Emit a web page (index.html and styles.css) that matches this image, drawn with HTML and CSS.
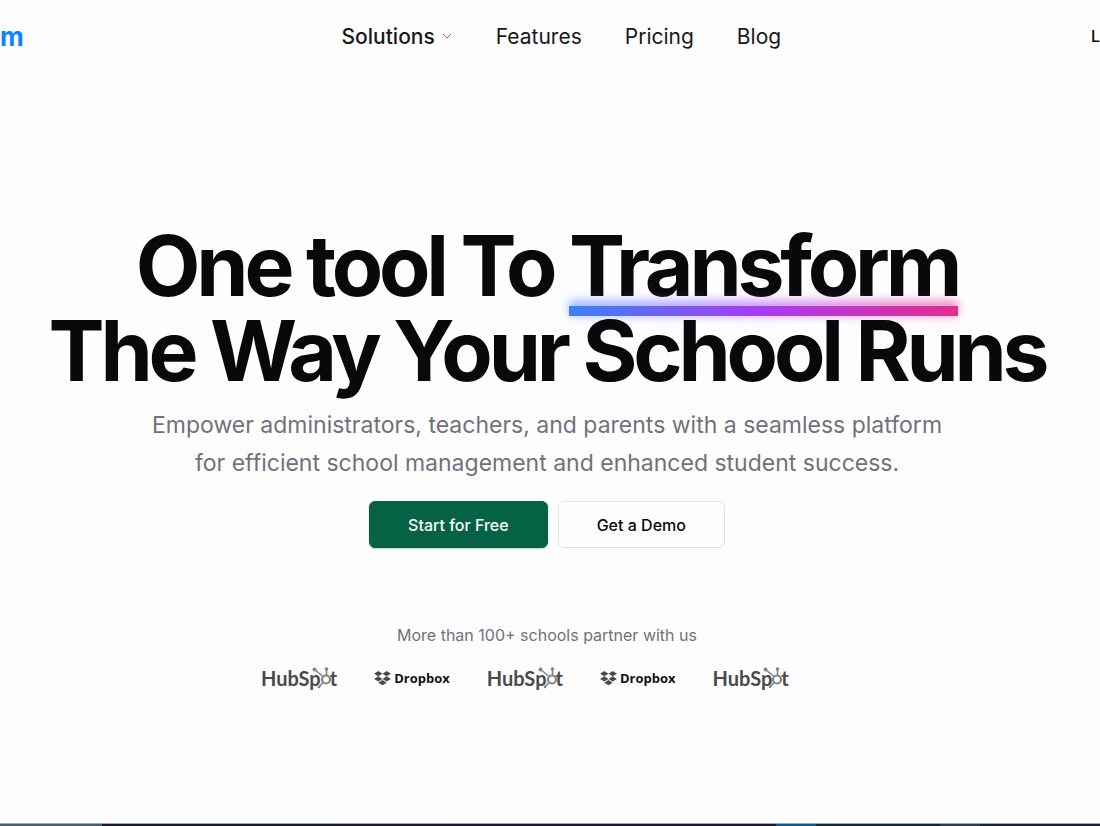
FILE: index.html
```html
<!DOCTYPE html>
<html lang="en">

<head>
    <meta charset="UTF-8">
    <meta content="width=device-width, initial-scale=1.0" name="viewport">
    <title>One tool To Transform The Way Your School Runs</title>
    <link rel="stylesheet" href="styles.css">
</head>

<body>

    <!-- Shared logo shapes -->
    <svg class="sprite" aria-hidden="true">
        <symbol id="sprocket" viewBox="0 0 20 24">
            <g fill="none" stroke="#858585">
                <circle cx="15" cy="13.500" r="4" stroke-width="2.200" />
                <path d="M12 10.500L3.500 3.500M15.500 9.500V3.500M12 16.500L8 21" stroke-width="1.600" />
            </g>
            <g fill="#858585">
                <circle cx="3.500" cy="3.500" r="2" />
                <circle cx="15.500" cy="3" r="1.800" />
                <circle cx="8" cy="21" r="1.300" />
            </g>
        </symbol>
        <symbol id="box" viewBox="0 0 18 16">
            <path fill="#4a4a4a" d="M4.500 0L9 2.800L4.500 5.600L0 2.800ZM13.500 0L18 2.800L13.500 5.600L9 2.800ZM4.500 5.600L9 8.400L4.500 11.200L0 8.400ZM13.500 5.600L18 8.400L13.500 11.200L9 8.400ZM9 9.600L13.500 12.400L9 15.200L4.500 12.400Z" />
        </symbol>
    </svg>

    <header class="header">
        <a class="logo" href="#">m</a>
        <nav class="nav">
            <button class="nav-menu" type="button">Solutions
                <svg class="chevron" viewBox="0 0 12 12" aria-hidden="true">
                    <path d="M2 4l4 4 4-4" />
                </svg>
            </button>
            <a href="#">Features</a>
            <a href="#">Pricing</a>
            <a href="#">Blog</a>
        </nav>
        <a class="login" href="#">L</a>
    </header>

    <main class="hero">
        <h1>One tool To <span class="underlined">Transform</span><br><span class="front">The Way Your School Runs</span></h1>
        <p class="lead">Empower administrators, teachers, and parents with a seamless platform for efficient school management and enhanced student success.</p>
        <div class="actions">
            <button class="btn btn-primary" type="button">Start for Free</button>
            <button class="btn btn-outline" type="button">Get a Demo</button>
        </div>

        <section class="partners">
            <p>More than 100+ schools partner with us</p>
            <ul>
                <li class="hubspot">HubSp<svg aria-hidden="true"><use href="#sprocket" /></svg>t</li>
                <li class="dropbox"><svg aria-hidden="true"><use href="#box" /></svg>Dropbox</li>
                <li class="hubspot">HubSp<svg aria-hidden="true"><use href="#sprocket" /></svg>t</li>
                <li class="dropbox"><svg aria-hidden="true"><use href="#box" /></svg>Dropbox</li>
                <li class="hubspot">HubSp<svg aria-hidden="true"><use href="#sprocket" /></svg>t</li>
            </ul>
        </section>
    </main>

    <footer class="strip"></footer>

</body>

</html>
```

FILE: styles.css
```css
* {
    box-sizing: border-box;
}

body {
    display: flex;
    flex-direction: column;
    min-height: 100vh;
    margin: 0;
    font-family: Inter, sans-serif;
    color: #09090b;
    background: #fefdfe;
}

a {
    color: inherit;
    text-decoration: none;
}

.sprite {
    position: absolute;
    width: 0;
    height: 0;
}

/* Header */
.header {
    display: flex;
    align-items: center;
    justify-content: space-between;
    height: 72px;
}

.logo {
    font-size: 26px;
    font-weight: 700;
    color: #0a84ff;
}

.nav {
    display: flex;
    align-items: center;
    gap: 43px;
    margin-left: 8px;
    font-size: 21px;
    color: #18181b;
}

.nav-menu {
    display: flex;
    align-items: center;
    gap: 6px;
    padding: 0;
    border: 0;
    background: none;
    font: inherit;
    font-weight: 500;
    color: inherit;
}

.chevron {
    width: 12px;
    height: 12px;
    fill: none;
    stroke: #71717a;
}

.login {
    font-size: 16px;
    font-weight: 500;
}

/* Hero */
.hero {
    flex: 1;
    padding: 151px 6px 0 0;
    text-align: center;
}

h1 {
    margin: 0;
    font-size: 84px;
    font-weight: 700;
    line-height: 85px;
    letter-spacing: -0.05em;
}

.underlined {
    position: relative;
}

.underlined::before,
.underlined::after {
    content: "";
    position: absolute;
    left: 0;
    right: 0;
    bottom: 0;
    height: 10px;
    background: linear-gradient(to right, #3b82f6, #a63df0, #e32d8c);
}

.underlined::before {
    height: 16px;
    filter: blur(5px);
    opacity: 0.5;
}

.front {
    position: relative;
}

.lead {
    max-width: 820px;
    margin: 13px auto 0;
    font-size: 23px;
    line-height: 38px;
    color: #71717a;
}

.actions {
    display: flex;
    justify-content: center;
    gap: 10px;
    margin-top: 19px;
}

.btn {
    height: 47px;
    padding: 0 38px;
    border: 1px solid #e4e4e7;
    border-radius: 6px;
    font: inherit;
    font-size: 16px;
    font-weight: 500;
}

.btn-primary {
    border-color: #066245;
    background: #066245;
    color: #fafafa;
    box-shadow: 0 1px 2px rgba(0, 0, 0, 0.2);
}

.btn-outline {
    background: #fefefe;
    color: #09090b;
}

/* Partners */
.partners {
    max-width: 572px;
    margin: 77px auto 0;
}

.partners p {
    margin: 0;
    font-size: 16px;
    line-height: 20px;
    color: #71717a;
}

.partners ul {
    display: flex;
    align-items: center;
    gap: 37px;
    margin: 21px 0 0;
    padding: 0;
    list-style: none;
}

.hubspot,
.dropbox {
    display: flex;
    align-items: center;
    height: 24px;
}

.hubspot {
    font-family: Lato, sans-serif;
    font-size: 20px;
    font-weight: 700;
    color: #4a4a4a;
}

.hubspot svg {
    width: 20px;
    height: 24px;
    margin: 0 -1px 0 -10px;
}

.dropbox {
    gap: 3px;
    font-family: "Open Sans", sans-serif;
    font-size: 13px;
    font-weight: 700;
    color: #111111;
}

.dropbox svg {
    width: 17px;
    height: 15px;
}

/* Dark strip along the bottom edge */
.strip {
    height: 3px;
    border-top: 1px solid #a3a8b0;
    background: linear-gradient(to right, #47616c 102px, #141b30 102px, #1b1930 776px, #0b5a94 776px, #0b5a94 816px, #10293a 816px, #10293a 940px, #2b3b50 940px, #2b3b50 980px, #16243a 980px);
}
```
